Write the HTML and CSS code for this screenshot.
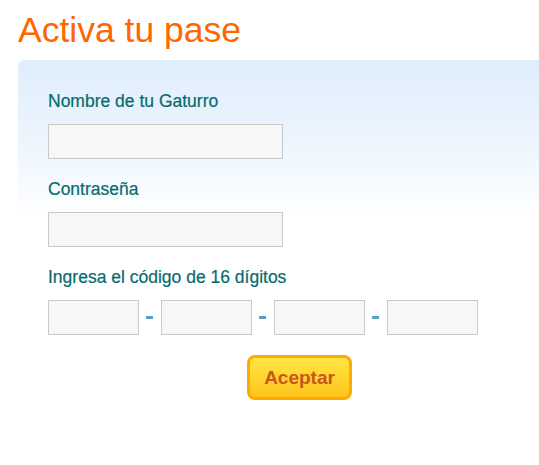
FILE: index.html
```html
<!DOCTYPE html>
<html lang="es">
<head>
  <meta charset="UTF-8" />
  <title>Activa tu pase</title>
  <link rel="stylesheet" href="styles.css">
</head>
<body>
  <h1 class="title">Activa tu pase</h1>
  <form class="panel" onsubmit="return false">
    <label class="label" for="user">Nombre de tu Gaturro</label>
    <input class="field" type="text" id="user" />

    <label class="label" for="pass">Contraseña</label>
    <input class="field" type="password" id="pass" />

    <label class="label" for="code1">Ingresa el código de 16 dígitos</label>
    <div class="code-row">
      <input class="field code" type="text" id="code1" maxlength="4" />
      <span class="dash"></span>
      <input class="field code" type="text" maxlength="4" />
      <span class="dash"></span>
      <input class="field code" type="text" maxlength="4" />
      <span class="dash"></span>
      <input class="field code" type="text" maxlength="4" />
    </div>

    <button class="btn" type="submit">Aceptar</button>
  </form>
</body>
</html>
```

FILE: styles.css
```css
* { box-sizing: border-box; margin: 0; padding: 0; }
body {
  background: #fff;
  font-family: 'Liberation Sans', Arial, sans-serif;
  overflow: hidden;
}
.title {
  color: #ff6600;
  font-size: 35.5px;
  font-weight: 400;
  line-height: 40px;
  margin: 10px 0 0 18px;
}
.panel {
  display: flex;
  flex-direction: column;
  align-items: flex-start;
  margin: 10px 0 0 18px;
  padding: 31px 30px 40px;
  border-radius: 7px 0 0 0;
  background: linear-gradient(#dfeefc 0, #eef6fe 90px, #ffffff 155px);
}
.label {
  color: #066b6c;
  font-size: 17.5px;
  line-height: 20px;
  margin-bottom: 13px;
  -webkit-text-stroke: 0.2px #066b6c;
}
.field {
  width: 235px;
  height: 35px;
  border: 1px solid #c9c9c9;
  background: #f7f7f7;
  margin-bottom: 20px;
  font-size: 14px;
  padding: 0 6px;
  outline: none;
}
.code-row {
  display: flex;
  align-items: center;
  margin-bottom: 20px;
}
.code-row .field {
  width: 91px;
  margin-bottom: 0;
}
.dash {
  width: 7px;
  height: 3px;
  background: #5a9fc6;
  margin: 0 8px 0 7px;
}
.btn {
  margin-left: 199px;
  width: 105px;
  height: 45px;
  border: 3px solid #ffaa00;
  border-radius: 8px;
  background: linear-gradient(#ffe645, #ffd22a 60%, #ffc41c);
  color: #c8561a;
  font-family: inherit;
  font-size: 19px;
  font-weight: 700;
  cursor: pointer;
}
```
